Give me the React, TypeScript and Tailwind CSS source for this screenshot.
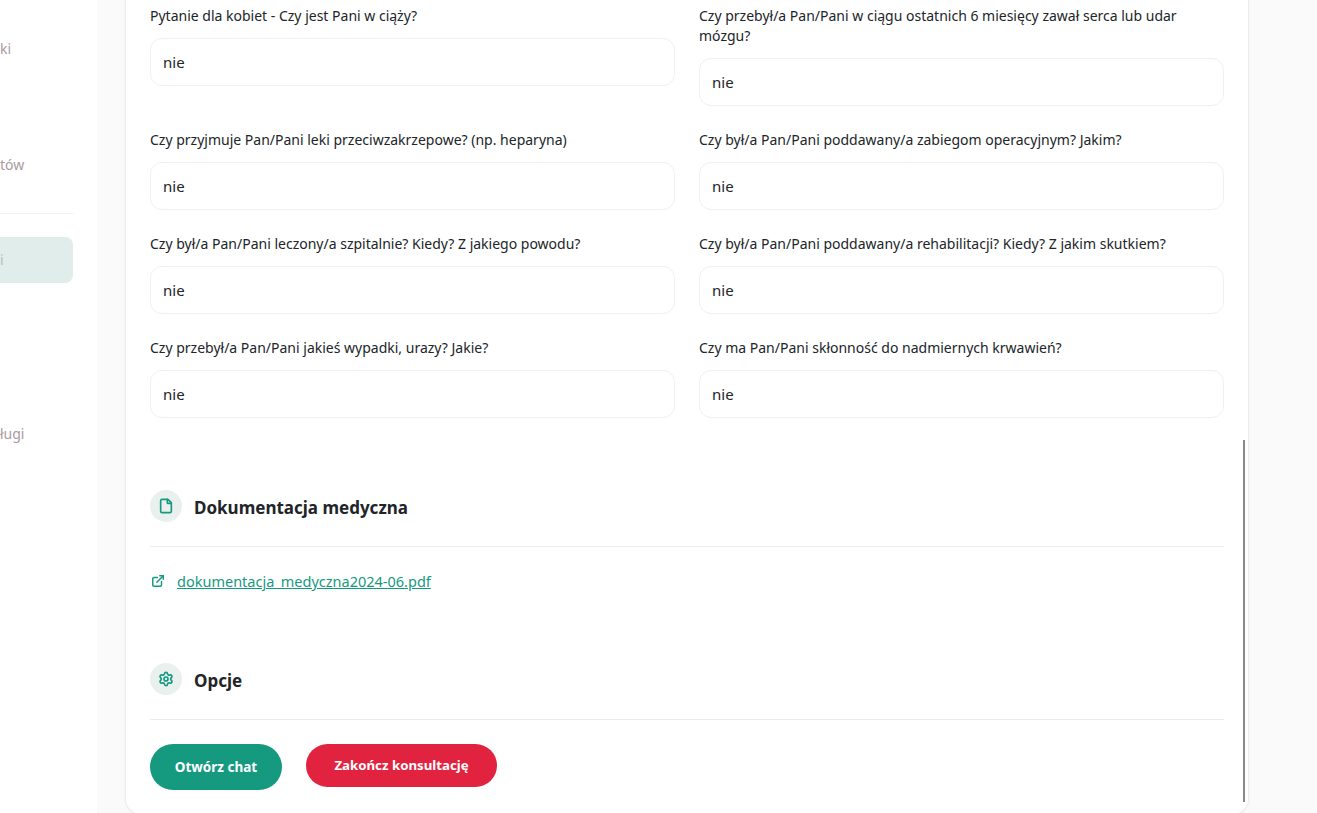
import { ExternalLink, File, Settings } from 'lucide-react'

const fields = [
  ['Pytanie dla kobiet - Czy jest Pani w ciąży?', 'Czy przebył/a Pan/Pani w ciągu ostatnich 6 miesięcy zawał serca lub udar mózgu?'],
  ['Czy przyjmuje Pan/Pani leki przeciwzakrzepowe? (np. heparyna)', 'Czy był/a Pan/Pani poddawany/a zabiegom operacyjnym? Jakim?'],
  ['Czy był/a Pan/Pani leczony/a szpitalnie? Kiedy? Z jakiego powodu?', 'Czy był/a Pan/Pani poddawany/a rehabilitacji? Kiedy? Z jakim skutkiem?'],
  ['Czy przebył/a Pan/Pani jakieś wypadki, urazy? Jakie?', 'Czy ma Pan/Pani skłonność do nadmiernych krwawień?'],
].flat()

function Field({ label }: { label: string }) {
  return (
    <div className="flex flex-col">
      <label className="block text-sm leading-5 text-[#212529] mb-3">{label}</label>
      <div className="h-12 flex items-center px-3 text-[15px] text-[#212529] bg-white border border-[#f0f0f0] rounded-xl">nie</div>
    </div>
  )
}

function SectionHeader({ title, children }: { title: string; children: React.ReactNode }) {
  return (
    <div className="flex items-center gap-3 pb-6 border-b border-[#ececec]">
      <div className="w-8 h-8 rounded-full bg-[#e9f0ee] flex items-center justify-center text-[#159a80]">{children}</div>
      <h3 className="h-8 pt-0.5 text-[17px] leading-8 font-bold text-[#212529]">{title}</h3>
    </div>
  )
}

function SideItem({ text }: { text: string }) {
  return <div className="h-5 text-sm leading-5 text-[#a99b9f]">{text}</div>
}

export default function App() {
  return (
    <div className="h-[813px] overflow-hidden flex bg-[#fafafa] font-['Noto_Sans','Lato',sans-serif]">
      {/* Sidebar, scrolled partly out of view */}
      <aside className="w-[97px] shrink-0 h-full bg-white">
        <div className="w-[73px] pt-[39px]">
          <SideItem text="ki" />
          <div className="mt-24"><SideItem text="tów" /></div>
          <div className="mt-[38px] border-t border-[#f0f0f0]" />
          <div className="mt-[23px] h-[46px] flex items-center bg-[#e1edea] rounded-r-lg text-sm text-[#b5c2bf]">i</div>
          <div className="mt-[141px]"><SideItem text="ługi" /></div>
        </div>
      </aside>

      <main className="relative ml-7 w-[1124px] h-[815px] shrink-0 bg-white border border-t-0 border-[#ececec] rounded-b-2xl shadow-[0_0_3px_rgba(0,0,0,0.04)] px-6 pt-[6px]">
        <div className="grid grid-cols-2 gap-x-6 gap-y-6">
          {fields.map((label) => (
            <Field key={label} label={label} />
          ))}
        </div>

        <section className="mt-[72px]">
          <SectionHeader title="Dokumentacja medyczna">
            <File className="w-4 h-4" strokeWidth={2.5} />
          </SectionHeader>
          <div className="mt-6 flex items-center gap-3 pl-px text-[#159a80]">
            <ExternalLink className="w-3.5 h-3.5" strokeWidth={2.5} />
            <a href="#" className="text-[14.5px] leading-5 underline">dokumentacja_medyczna2024-06.pdf</a>
          </div>
        </section>

        <section className="mt-[72px]">
          <SectionHeader title="Opcje">
            <Settings className="w-4 h-4" strokeWidth={2.5} />
          </SectionHeader>
          <div className="mt-6 flex items-start gap-6">
            <button className="w-[132px] h-[46px] rounded-full bg-[#159a80] text-white text-[13.5px] font-bold">Otwórz chat</button>
            <button className="w-[191px] h-[43px] rounded-full bg-[#e22340] text-white text-[13.25px] font-bold">Zakończ konsultację</button>
          </div>
        </section>

        {/* Scrollbar thumb */}
        <div className="absolute right-[3px] top-[440px] w-0.5 h-[362px] bg-[#888888]" />
      </main>
    </div>
  )
}
